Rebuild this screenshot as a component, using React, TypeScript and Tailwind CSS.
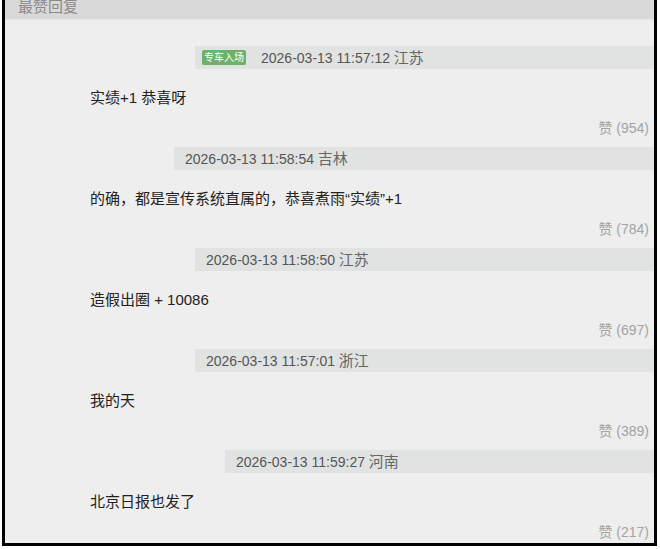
import React from "react";

type Reply = {
  time: string;
  place: string;
  text: string;
  likes: number;
  barLeft: string;
  badge?: boolean;
};

const replies: Reply[] = [
  { time: "2026-03-13 11:57:12", place: "江苏", text: "实绩+1 恭喜呀", likes: 954, barLeft: "ml-[190px]", badge: true },
  { time: "2026-03-13 11:58:54", place: "吉林", text: "的确，都是宣传系统直属的，恭喜煮雨“实绩”+1", likes: 784, barLeft: "ml-[169px]" },
  { time: "2026-03-13 11:58:50", place: "江苏", text: "造假出圈 + 10086", likes: 697, barLeft: "ml-[190px]" },
  { time: "2026-03-13 11:57:01", place: "浙江", text: "我的天", likes: 389, barLeft: "ml-[190px]" },
  { time: "2026-03-13 11:59:27", place: "河南", text: "北京日报也发了", likes: 217, barLeft: "ml-[220px]" },
];

const font = "font-['Liberation_Sans','Noto_Sans_CJK_SC',sans-serif]";

function ReplyRow({ r }: { r: Reply }) {
  return (
    <div className="flex flex-col">
      <div className={`${r.barLeft} h-[23px] bg-[#e1e3e2] flex items-center ${r.badge ? "pl-[7px]" : "pl-[11px]"}`}>
        {r.badge && (
          <span className="mr-[15px] h-[15px] w-[44px] rounded-[2px] bg-[#6cb26a] text-white text-[10px] leading-[15px] text-center">
            专车入场
          </span>
        )}
        <span className="text-[14px] text-[#555] leading-none">
          {r.time} <span className="text-[15px] text-[#666]">{r.place}</span>
        </span>
      </div>
      <div className="mt-[17px] pl-[85px] h-[24px] leading-[24px] text-[15px] text-[#222]">{r.text}</div>
      <div className="mt-[8px] pr-[5px] h-[20px] leading-[20px] text-right text-[14px] text-[#a3a3a3]">
        赞 ({r.likes})
      </div>
    </div>
  );
}

export default function App() {
  return (
    <div className={`w-[660px] h-[549px] bg-white pl-[2px] pr-[3px] pb-[3px] ${font}`}>
      <div className="h-full border-[3px] border-t-0 border-black bg-[#eeeeee] flex flex-col overflow-hidden">
        <div className="h-[20px] bg-[#d9d9d9] border-b border-[#e6e6e6] pl-[13px] overflow-hidden">
          <div className="-mt-[4px] text-[15px] leading-[22px] text-[#8a8a8a]">最赞回复</div>
        </div>
        <div className="mt-[26px] flex flex-col gap-[9px]">
          {replies.map((r) => (
            <ReplyRow key={r.time} r={r} />
          ))}
        </div>
      </div>
    </div>
  );
}
